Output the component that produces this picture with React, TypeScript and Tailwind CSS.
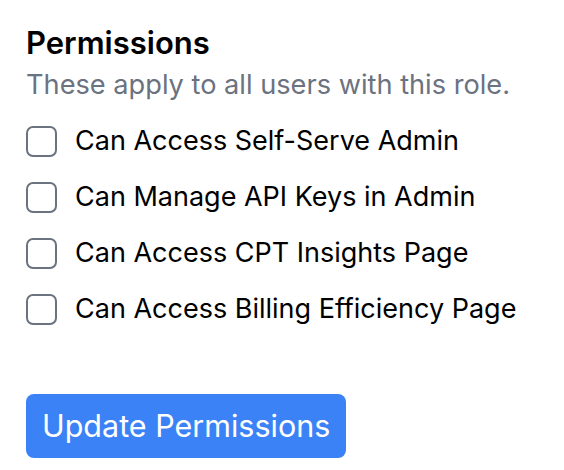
import React from "react";

const permissions = [
  "Can Access Self-Serve Admin",
  "Can Manage API Keys in Admin",
  "Can Access CPT Insights Page",
  "Can Access Billing Efficiency Page",
];

export default function App() {
  return (
    <div className="min-h-screen bg-white px-[26px] pt-[25px] font-['Inter',sans-serif]">
      <h2 className="text-[31px] font-semibold leading-[36px] text-black">Permissions</h2>
      <p className="mt-[8px] text-[27.2px] leading-[32px] text-[#6b7280]">
        These apply to all users with this role.
      </p>
      <div className="mt-[24px] flex flex-col gap-[24px]">
        {permissions.map((p) => (
          <label key={p} className="flex items-center gap-[18px]">
            <span className="h-[31px] w-[31px] shrink-0 rounded-[7px] border-[2px] border-[#6b7280] bg-white" />
            <span className="text-[27px] leading-[32px] text-black">{p}</span>
          </label>
        ))}
      </div>
      <button className="mt-[69px] h-[64px] rounded-[8px] bg-[#3b82f6] px-[16px] text-[30.5px] text-white">
        Update Permissions
      </button>
    </div>
  );
}
